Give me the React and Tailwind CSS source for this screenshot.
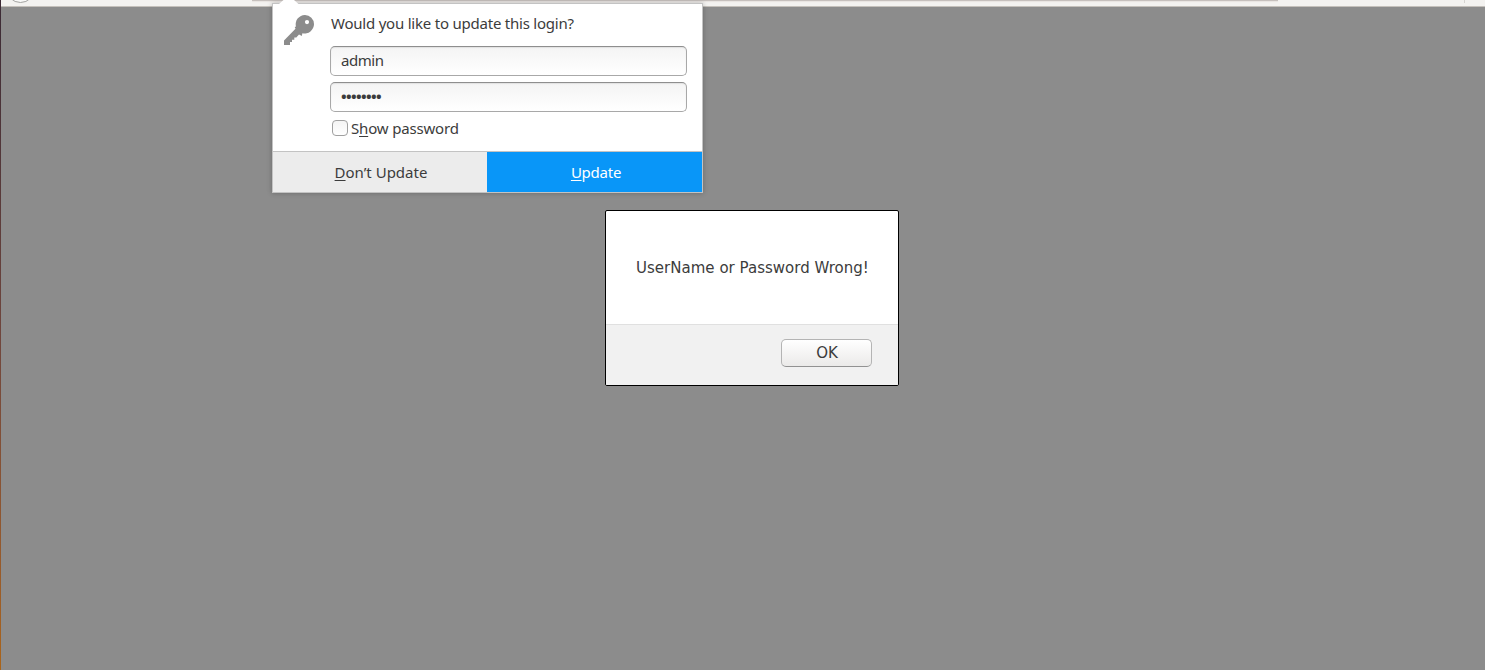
import { useState } from "react";

const KeyIcon = () => (
    <svg className="w-[30px] h-[30px]" viewBox="0 0 30 30" fill="none" xmlns="http://www.w3.org/2000/svg">
        <path
            fillRule="evenodd"
            clipRule="evenodd"
            d="M21 0a9.200 9.200 0 0 0-9 11.600L10.700 12l.8 1.800L0 25.500V30h6v-3h2v-2.300h2.300v-2.200h2l2.700-3 1 .5 1.800 1 .6-2.800A9.400 9.400 0 0 0 30 9 9 9 0 0 0 21 0zM23 5a2.100 2.100 0 1 1 0 4.200A2.100 2.100 0 0 1 23 5z"
            fill="#8c8c8c"
        />
    </svg>
);

const Arrow = () => (
    <svg className="absolute left-[6px] -top-[4px] w-5 h-[4px]" viewBox="0 0 20 4">
        <path d="M0 4L4.500 0H15L19.500 4z" fill="#fff" />
    </svg>
);

const Toolbar = () => (
    <div className="h-[7px] shrink-0 bg-[#f3f2f0] border-b border-[#c4c0bb] flex items-start overflow-hidden">
        <svg className="w-[251px] h-[6px] shrink-0" viewBox="0 0 251 6">
            <circle cx="19.500" cy="-11.500" r="14" fill="#f9f9f8" stroke="#a3a3a1" />
        </svg>
        <div className="w-[1026px] h-px bg-[#c6c0bd] shadow-[0_1px_1px_#e6e2df]" />
        <div className="ml-[186px] w-px h-[3px] bg-[#d6d4d1]" />
    </div>
);

const fieldStyle =
    "block w-[357px] h-[30px] px-[10px] pb-[2px] rounded-[5px] border border-[#a8a8a8] border-t-[#8e8e8e] bg-linear-to-b from-[#f4f4f4] to-white shadow-[inset_0_1px_1px_#e2e2e2] outline-none";

export default function App() {
    const [username, setUsername] = useState("admin");
    const [password, setPassword] = useState("password");
    const [showPassword, setShowPassword] = useState(false);

    return (
        <div className="relative h-[670px] w-[1485px] overflow-hidden flex bg-[#8c8c8c] text-[#3c3c3c] font-['Noto_Sans',sans-serif] text-[15px]">
            {/* Desktop edge */}
            <div className="w-px shrink-0 bg-linear-to-b from-[#3b2a35] via-[#70463d] to-[#aa6418]" />

            <div className="flex-1 flex flex-col items-center">
                <div className="w-full">
                    <Toolbar />
                </div>

                {/* Alert */}
                <div className="mt-[203px] ml-[17px] w-[294px] h-[176px] flex flex-col rounded-[2px] border border-black bg-white overflow-hidden font-['DejaVu_Sans',sans-serif]">
                    <div className="flex-1 flex items-center pt-[2px] pl-[30.5px] text-[15px] tracking-[0.02px] whitespace-nowrap">
                        UserName or Password Wrong!
                    </div>
                    <div className="h-[61px] flex justify-end pt-[14px] pr-[26px] bg-[#f1f1f1] border-t border-[#e0e0e0]">
                        <button className="w-[91px] h-[28px] pl-[2px] rounded-[5px] border border-[#b4b4b4] border-b-[#929292] bg-linear-to-b from-white to-[#ebeae9] text-[15px] leading-none">
                            OK
                        </button>
                    </div>
                </div>
            </div>

            {/* Save login popup */}
            <div className="absolute left-[272px] top-[3px] w-[431px] h-[190px] flex flex-col bg-white border border-[#c3c3c3] shadow-[0_0_5px_rgba(0,0,0,0.25)]">
                <Arrow />
                <div className="flex-1 flex pl-[11px] pt-[11px]">
                    <KeyIcon />
                    <div className="ml-4 -mt-[1px]">
                        <p className="ml-[1px] h-[32px] leading-[19px] tracking-[-0.22px] whitespace-nowrap">
                            Would you like to update this login?
                        </p>
                        <input
                            type="text"
                            value={username}
                            onChange={(e) => setUsername(e.target.value)}
                            className={`${fieldStyle} tracking-[-0.45px]`}
                        />
                        <input
                            type={showPassword ? "text" : "password"}
                            value={password}
                            onChange={(e) => setPassword(e.target.value)}
                            className={`${fieldStyle} mt-[6px] font-bold tracking-[-0.65px]`}
                        />
                        <label className="mt-[8px] ml-[2px] flex items-start gap-[3px] h-[17px] leading-[17px] tracking-[-0.17px]">
                            <input
                                type="checkbox"
                                checked={showPassword}
                                onChange={(e) => setShowPassword(e.target.checked)}
                                className="appearance-none w-4 h-4 rounded-[4px] border border-[#a0a0a0] bg-linear-to-b from-[#f4f4f4] to-white"
                            />
                            <span>
                                S<span className="underline underline-offset-2">h</span>ow password
                            </span>
                        </label>
                    </div>
                </div>
                <div className="h-[41px] flex border-t border-[#c3c3c3]">
                    <button className="w-[214px] pl-[2px] bg-[#ececec]">
                        <span className="underline underline-offset-2">D</span>on’t Update
                    </button>
                    <button className="flex-1 pl-[3px] bg-[#0996f8] text-white tracking-[-0.25px]">
                        <span className="underline underline-offset-2">U</span>pdate
                    </button>
                </div>
            </div>
        </div>
    );
}
